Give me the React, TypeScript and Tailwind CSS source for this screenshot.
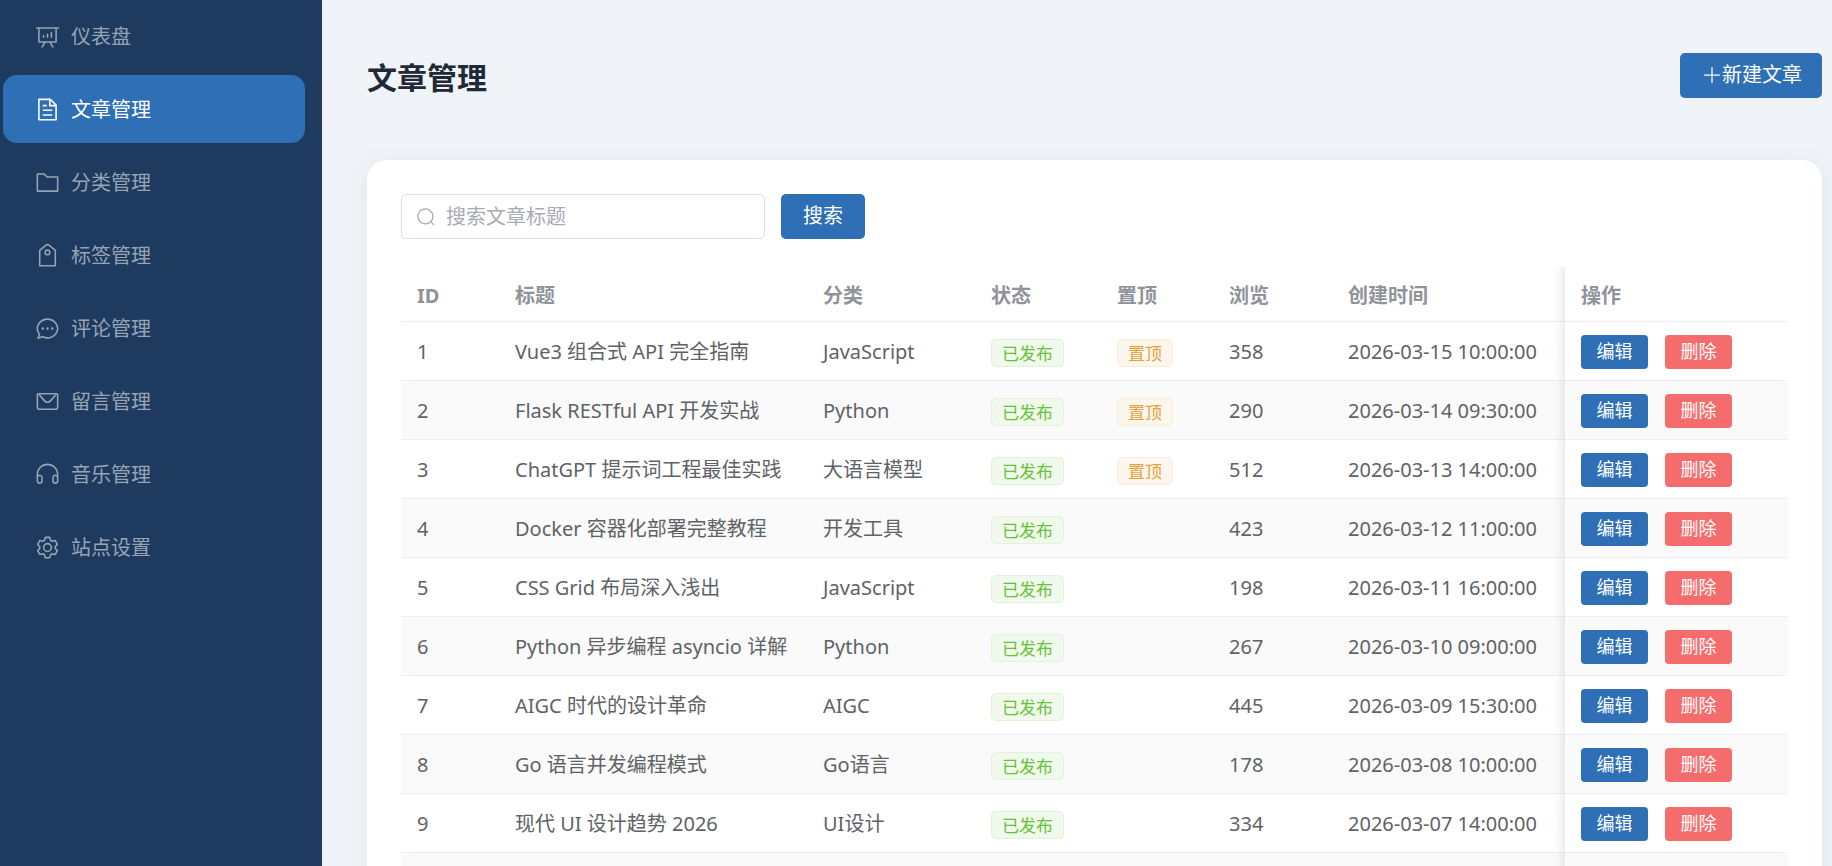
// App.tsx — admin console: sidebar navigation and article list.

import { useState } from 'react';
import { clsx } from 'clsx';

/* ------------------------------------------------------------------ */
/*  Icons                                                              */
/* ------------------------------------------------------------------ */

const ICONS = {
  board: [
    'm665.216 768 110.848 192h-73.856L591.36 768H433.024L322.176 960H248.32l110.848-192H160a32 32 0 0 1-32-32V192H64a32 32 0 0 1 0-64h896a32 32 0 1 1 0 64h-64v544a32 32 0 0 1-32 32zM832 192H192v512h640zM352 448a32 32 0 0 1 32 32v64a32 32 0 0 1-64 0v-64a32 32 0 0 1 32-32m160-64a32 32 0 0 1 32 32v128a32 32 0 0 1-64 0V416a32 32 0 0 1 32-32m160-64a32 32 0 0 1 32 32v192a32 32 0 1 1-64 0V352a32 32 0 0 1 32-32',
  ],
  document: [
    'M832 384H576V128H192v768h640zm-26.496-64L640 154.496V320zM160 64h480l256 256v608a32 32 0 0 1-32 32H160a32 32 0 0 1-32-32V96a32 32 0 0 1 32-32m160 448h384v64H320zm0-192h160v64H320zm0 384h384v64H320z',
  ],
  folder: [
    'M128 192v640h768V320H485.76L357.504 192zm-32-64h287.872l128.384 128H928a32 32 0 0 1 32 32v576a32 32 0 0 1-32 32H96a32 32 0 0 1-32-32V160a32 32 0 0 1 32-32',
  ],
  tag: [
    'M224 318.336V896h576V318.336L552.512 115.84a64 64 0 0 0-81.024 0zM593.024 66.304l259.2 212.096A32 32 0 0 1 864 303.168V928a32 32 0 0 1-32 32H192a32 32 0 0 1-32-32V303.168a32 32 0 0 1 11.712-24.768l259.2-212.096a128 128 0 0 1 162.112 0',
    'M512 448a64 64 0 1 0 0-128 64 64 0 0 0 0 128m0 64a128 128 0 1 1 0-256 128 128 0 0 1 0 256',
  ],
  chat: [
    'm174.72 855.68 135.296-45.12 23.68 11.84C388.096 849.536 448.576 864 512 864c211.84 0 384-166.784 384-352S723.84 160 512 160 128 326.784 128 512c0 69.12 24.96 139.264 70.848 199.232l22.08 28.8-46.272 115.584zm-45.248 82.56A32 32 0 0 1 89.6 896l58.368-145.92C94.72 680.32 64 596.864 64 512 64 299.904 256 96 512 96s448 203.904 448 416-192 416-448 416a461.056 461.056 0 0 1-206.912-48.384l-175.616 58.56z',
    'M512 563.2a51.2 51.2 0 1 1 0-102.4 51.2 51.2 0 0 1 0 102.4m192 0a51.2 51.2 0 1 1 0-102.4 51.2 51.2 0 0 1 0 102.4m-384 0a51.2 51.2 0 1 1 0-102.4 51.2 51.2 0 0 1 0 102.4',
  ],
  message: [
    'M128 224v512a64 64 0 0 0 64 64h640a64 64 0 0 0 64-64V224zm0-64h768a64 64 0 0 1 64 64v512a128 128 0 0 1-128 128H192A128 128 0 0 1 64 736V224a64 64 0 0 1 64-64',
    'M904 224 656.512 506.88a192 192 0 0 1-289.024 0L120 224zm-698.944 0 210.56 240.704a128 128 0 0 0 192.704 0L818.944 224z',
  ],
  headset: [
    'M896 529.152V512a384 384 0 1 0-768 0v17.152A128 128 0 0 1 320 640v128a128 128 0 1 1-256 0V512a448 448 0 1 1 896 0v256a128 128 0 1 1-256 0V640a128 128 0 0 1 192-110.848M896 640a64 64 0 0 0-128 0v128a64 64 0 0 0 128 0zm-768 0v128a64 64 0 0 0 128 0V640a64 64 0 1 0-128 0',
  ],
  setting: [
    'M600.704 64a32 32 0 0 1 30.464 22.208l35.2 109.376c14.784 7.232 28.928 15.36 42.432 24.512l112.384-24.192a32 32 0 0 1 34.432 15.36L944.32 364.8a32 32 0 0 1-4.032 37.504l-77.12 85.12a357.12 357.12 0 0 1 0 49.024l77.12 85.248a32 32 0 0 1 4.032 37.504l-88.704 153.6a32 32 0 0 1-34.432 15.296L708.8 803.904c-13.44 9.088-27.648 17.28-42.368 24.512l-35.264 109.376A32 32 0 0 1 600.704 960H423.296a32 32 0 0 1-30.464-22.208L357.696 828.48a351.616 351.616 0 0 1-42.56-24.64l-112.32 24.256a32 32 0 0 1-34.432-15.36L79.68 659.2a32 32 0 0 1 4.032-37.504l77.12-85.248a357.12 357.12 0 0 1 0-48.896l-77.12-85.248A32 32 0 0 1 79.68 364.8l88.704-153.6a32 32 0 0 1 34.432-15.296l112.32 24.256c13.568-9.152 27.776-17.408 42.56-24.64l35.2-109.312A32 32 0 0 1 423.232 64H600.64zm-23.424 64H446.72l-36.352 113.088-24.512 11.968a294.113 294.113 0 0 0-34.816 20.096l-22.656 15.36-116.224-25.088-65.28 113.152 79.68 88.192-1.92 27.136a293.12 293.12 0 0 0 0 40.192l1.92 27.136-79.808 88.192 65.344 113.152 116.224-25.024 22.656 15.296a294.113 294.113 0 0 0 34.816 20.096l24.512 11.968L446.72 896h130.688l36.48-113.152 24.448-11.904a288.282 288.282 0 0 0 34.752-20.096l22.592-15.296 116.288 25.024 65.28-113.152-79.744-88.192 1.92-27.136a293.12 293.12 0 0 0 0-40.256l-1.92-27.136 79.808-88.128-65.344-113.152-116.288 24.96-22.592-15.232a287.616 287.616 0 0 0-34.752-20.096l-24.448-11.904L577.344 128zM512 320a192 192 0 1 1 0 384 192 192 0 0 1 0-384m0 64a128 128 0 1 0 0 256 128 128 0 0 0 0-256',
  ],
  search: [
    'm795.904 750.72 124.992 124.928a32 32 0 0 1-45.248 45.248L750.656 795.904a416 416 0 1 1 45.248-45.248zM480 832a352 352 0 1 0 0-704 352 352 0 0 0 0 704',
  ],
  plus: [
    'M480 480V128a32 32 0 0 1 64 0v352h352a32 32 0 1 1 0 64H544v352a32 32 0 1 1-64 0V544H128a32 32 0 0 1 0-64z',
  ],
};

type IconName = keyof typeof ICONS;

function Icon({ name, className }: { name: IconName; className?: string }) {
  return (
    <svg viewBox="0 0 1024 1024" fill="currentColor" aria-hidden="true" className={clsx('shrink-0', className)}>
      {ICONS[name].map((d) => (
        <path key={d} d={d} />
      ))}
    </svg>
  );
}

/* ------------------------------------------------------------------ */
/*  Data                                                               */
/* ------------------------------------------------------------------ */

interface Article {
  id: number;
  title: string;
  category: string;
  pinned?: boolean;
  views?: number;
  createdAt: string;
}

const MENU: { label: string; icon: IconName }[] = [
  { label: '仪表盘', icon: 'board' },
  { label: '文章管理', icon: 'document' },
  { label: '分类管理', icon: 'folder' },
  { label: '标签管理', icon: 'tag' },
  { label: '评论管理', icon: 'chat' },
  { label: '留言管理', icon: 'message' },
  { label: '音乐管理', icon: 'headset' },
  { label: '站点设置', icon: 'setting' },
];

const ARTICLES: Article[] = [
  { id: 1, title: 'Vue3 组合式 API 完全指南', category: 'JavaScript', pinned: true, views: 358, createdAt: '2026-03-15 10:00:00' },
  { id: 2, title: 'Flask RESTful API 开发实战', category: 'Python', pinned: true, views: 290, createdAt: '2026-03-14 09:30:00' },
  { id: 3, title: 'ChatGPT 提示词工程最佳实践', category: '大语言模型', pinned: true, views: 512, createdAt: '2026-03-13 14:00:00' },
  { id: 4, title: 'Docker 容器化部署完整教程', category: '开发工具', views: 423, createdAt: '2026-03-12 11:00:00' },
  { id: 5, title: 'CSS Grid 布局深入浅出', category: 'JavaScript', views: 198, createdAt: '2026-03-11 16:00:00' },
  { id: 6, title: 'Python 异步编程 asyncio 详解', category: 'Python', views: 267, createdAt: '2026-03-10 09:00:00' },
  { id: 7, title: 'AIGC 时代的设计革命', category: 'AIGC', views: 445, createdAt: '2026-03-09 15:30:00' },
  { id: 8, title: 'Go 语言并发编程模式', category: 'Go语言', views: 178, createdAt: '2026-03-08 10:00:00' },
  { id: 9, title: '现代 UI 设计趋势 2026', category: 'UI设计', views: 334, createdAt: '2026-03-07 14:00:00' },
  { id: 10, title: '', category: '', createdAt: '' },
];

/* ------------------------------------------------------------------ */
/*  Pieces                                                             */
/* ------------------------------------------------------------------ */

function Sidebar({ active, onSelect }: { active: string; onSelect: (label: string) => void }) {
  return (
    <aside className="w-[322px] shrink-0 bg-[#1e3a5f]">
      <nav className="flex flex-col gap-[5px] pt-0.5 pr-[17px] pl-[3px]">
        {MENU.map((item) => (
          <a
            key={item.label}
            href="#"
            onClick={(e) => {
              e.preventDefault();
              onSelect(item.label);
            }}
            className={clsx(
              'flex h-[68px] items-center gap-[11px] rounded-[14px] pl-8 text-xl',
              active === item.label ? 'bg-[#2e6fb5] text-white' : 'text-[#96a4b6] hover:text-white',
            )}
          >
            <Icon name={item.icon} className="size-[25px]" />
            <span className="pt-0.5">{item.label}</span>
          </a>
        ))}
      </nav>
    </aside>
  );
}

function Tag({ tone, children }: { tone: 'success' | 'warning'; children: React.ReactNode }) {
  return (
    <span
      className={clsx(
        'inline-flex h-7 items-center rounded-[5px] border px-2.5 text-[17px] leading-none',
        tone === 'success'
          ? 'border-[#e1f3d8] bg-[#f0f9eb] text-[#67c23a]'
          : 'border-[#faecd8] bg-[#fdf6ec] text-[#e6a23c]',
      )}
    >
      {children}
    </span>
  );
}

const FIXED_CELL =
  "relative before:absolute before:top-0 before:-bottom-px before:-left-3.5 before:w-3.5 before:shadow-[inset_-13px_0_13px_-13px_rgba(0,0,0,0.15)] before:content-['']";

function ArticleTable({ rows }: { rows: Article[] }) {
  return (
    <table className="w-full table-fixed border-separate border-spacing-0 text-left text-xl text-[#606266]">
      <colgroup>
        <col className="w-[98px]" />
        <col />
        <col className="w-[168px]" />
        <col className="w-[126px]" />
        <col className="w-28" />
        <col className="w-[119px]" />
        <col className="w-[233px]" />
        <col className="w-[223px]" />
      </colgroup>
      <thead>
        <tr className="h-[55px] font-bold text-[#909399] *:border-b *:border-[#ebeef5] *:px-4 *:pt-1">
          <th scope="col">ID</th>
          <th scope="col">标题</th>
          <th scope="col">分类</th>
          <th scope="col">状态</th>
          <th scope="col">置顶</th>
          <th scope="col">浏览</th>
          <th scope="col">创建时间</th>
          <th scope="col" className={FIXED_CELL}>操作</th>
        </tr>
      </thead>
      <tbody>
        {rows.map((row) => (
          <tr key={row.id} className="h-[59px] whitespace-nowrap *:border-b *:border-[#ebeef5] *:px-4 *:pt-0.5 even:bg-[#fafafa]">
            <td>{row.id}</td>
            <td>{row.title}</td>
            <td>{row.category}</td>
            <td className="pt-1!">
              <Tag tone="success">已发布</Tag>
            </td>
            <td className="pt-1!">{row.pinned && <Tag tone="warning">置顶</Tag>}</td>
            <td>{row.views}</td>
            <td>{row.createdAt}</td>
            <td className={FIXED_CELL}>
              <div className="flex gap-[17px] text-lg leading-none text-white">
                <button type="button" className="h-[34px] w-[67px] rounded bg-[#2e6fb5] pb-0.5 hover:bg-[#4a86c5]">
                  编辑
                </button>
                <button type="button" className="h-[34px] w-[67px] rounded bg-[#f56c6c] pb-0.5 hover:bg-[#f78989]">
                  删除
                </button>
              </div>
            </td>
          </tr>
        ))}
      </tbody>
    </table>
  );
}

/* ------------------------------------------------------------------ */
/*  Page                                                               */
/* ------------------------------------------------------------------ */

export default function App() {
  const [active, setActive] = useState('文章管理');
  const [keyword, setKeyword] = useState('');
  const [query, setQuery] = useState('');

  const rows = query ? ARTICLES.filter((a) => a.title.includes(query)) : ARTICLES;

  return (
    <div className="flex h-screen overflow-hidden bg-[#f0f4f8] font-['Noto_Sans','Noto_Sans_CJK_SC',sans-serif]">
      <Sidebar active={active} onSelect={setActive} />

      <main className="min-w-0 flex-1 pt-[53px] pr-2.5 pl-[45px]">
        <header className="mb-[62px] flex h-[45px] items-center justify-between">
          <h1 className="pt-1 text-3xl font-bold text-[#1f2937]">文章管理</h1>
          <button
            type="button"
            className="flex h-[45px] items-center rounded-[5px] bg-[#2e6fb5] pr-5 pb-0.5 pl-[22px] text-xl text-white hover:bg-[#4a86c5]"
          >
            <Icon name="plus" className="size-5" />
            新建文章
          </button>
        </header>

        <section className="rounded-[20px] bg-white p-[34px] shadow-[0_4px_24px_rgba(30,58,95,0.08)]">
          <form
            className="mb-7 flex gap-4"
            onSubmit={(e) => {
              e.preventDefault();
              setQuery(keyword.trim());
            }}
          >
            <label className="flex h-[45px] w-[364px] items-center gap-2.5 rounded-[5px] border border-[#dcdfe6] px-3.5 text-[#a8abb2] focus-within:border-[#2e6fb5]">
              <Icon name="search" className="size-5" />
              <input
                type="text"
                value={keyword}
                onChange={(e) => setKeyword(e.target.value)}
                placeholder="搜索文章标题"
                aria-label="搜索文章标题"
                className="min-w-0 flex-1 bg-transparent text-xl text-[#606266] outline-none placeholder:text-[#a8abb2]"
              />
            </label>
            <button type="submit" className="h-[45px] rounded-[5px] bg-[#2e6fb5] px-[22px] pb-0.5 text-xl text-white hover:bg-[#4a86c5]">
              搜索
            </button>
          </form>

          <ArticleTable rows={rows} />
        </section>
      </main>
    </div>
  );
}
